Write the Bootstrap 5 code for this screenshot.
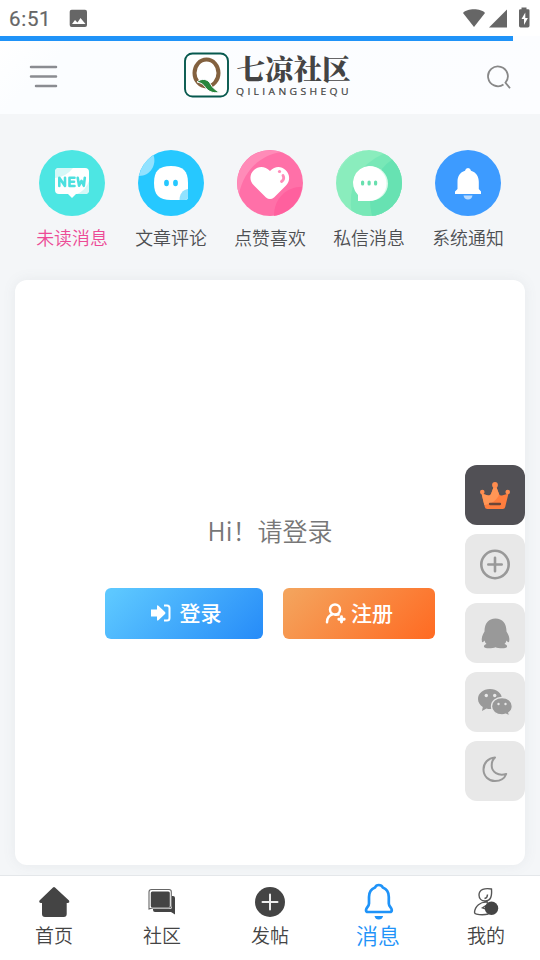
<!DOCTYPE html>
<html lang="zh-CN">
<head>
<meta charset="utf-8">
<meta name="viewport" content="width=device-width, initial-scale=1">
<title>七凉社区</title>
<link href="https://cdn.jsdelivr.net/npm/bootstrap@5.3.0/dist/css/bootstrap.min.css" rel="stylesheet">
<style>
body{font-family:"Noto Sans CJK SC",sans-serif;background:#f4f6f8;color:#4d4f52;height:960px;overflow:hidden}
svg{display:block;flex:none}
.status{height:36px;background:#fff;color:#666;padding:0 9px}
.clock{font:400 20.500px/36px Roboto,sans-serif;letter-spacing:.7px;width:60px;padding-top:1px;-webkit-text-stroke:.2px #666}
.load-track{height:5px;background:#fcfdff;border-radius:0}
.load-track .progress-bar{background:#1f93f8}
.site-head{height:73px;background:linear-gradient(135deg,#fff 0,#fbfdff 12%,#fcfdff);padding:0 27px 0 28px}
.brand{margin-right:12px}
.brand-words{margin-left:6px;padding-bottom:6px}
.brand-cn{font:900 28.5px/33px "Noto Serif CJK SC","Noto Sans CJK SC",serif;color:#444;white-space:nowrap;margin-bottom:1px}
.brand-en{font:500 9.5px/13px "Open Sans","Noto Sans",sans-serif;letter-spacing:3.100px;color:#444;margin-right:-8px;-webkit-text-stroke:.2px #444;transform:scaleX(1.085);transform-origin:left}
.shortcuts{height:166px;padding:36px 22.5px 0}
.shortcut{width:99px;font-size:17.900px;line-height:24px;font-weight:350}
.shortcut span{margin-top:9px}
.hot{color:#ec4b96}
.panel{margin:0 15px;height:585px;border-radius:12px;box-shadow:0 0 14px rgba(100,110,120,.09)}
.hello{font-size:25px;line-height:36px;color:#777;padding-top:232px;font-weight:350}
.acts{gap:20px;margin-top:40px}
.act{height:51px;border-radius:6px;font-size:21px;font-weight:500;line-height:30px;color:#fff;border:0;padding:0 0 3px}
.act:hover{color:#fff}
.act-in{width:158px;background:linear-gradient(135deg,#5dc8ff 5%,#268bf8)}
.act-up{width:152px;background:linear-gradient(135deg,#f4a35c 5%,#ff6a22)}
.act svg{margin-top:2px}
.floaters{position:fixed;left:465px;top:465px;gap:9px}
.floater{width:60px;height:60px;border-radius:12px;background:#e8e8e8;color:#999}
.floater.vip{background:#515055}
.tabs{height:85px;border-top:1px solid #e4e7ea;color:#444;font-size:19px}
.tabs a{width:108px;color:#444;padding-top:8px;line-height:30px;font-weight:350}
.tabs a.current{color:#1f93f8;font-size:22px;padding-top:6px;line-height:28px}
</style>
</head>
<body class="d-flex flex-column">
<div class="status d-flex align-items-center">
  <span class="clock">6:51</span>
  <svg width="20" height="20" viewBox="0 0 20 20"><rect x=".7" y="1.700" width="17.300" height="17.300" rx="2" fill="#666"/><path d="M3 16l3-4 2.500 2.500 3-4.500 5 6z" fill="#fff"/></svg>
  <svg class="ms-auto" width="68" height="24" viewBox="463 5.500 68 24" fill="#666"><path d="M463 12.500C467 7.500 481 7.500 485 12.500L474 26.500z"/><path d="M507 9v18h-18z"/><path d="M519 10q0-1.300 1.300-1.300h1.200V7h5v1.700h1.700q1.300 0 1.300 1.300v15.300q0 1.700-1.700 1.700h-7.200q-1.600 0-1.600-1.700z"/><path d="M525.300 12l-3.800 6.500h2.500v6l3.900-7h-2.600z" fill="#fff"/></svg>
</div>
<div class="progress load-track"><div class="progress-bar" style="width:95%"></div></div>
<header class="site-head d-flex align-items-center justify-content-between">
  <svg width="32" height="73" viewBox="28 41 32 73" stroke="#8a8c91" stroke-width="2.500" stroke-linecap="round"><path d="M31 67h25M31 76.500h25M36 86h20"/></svg>
  <div class="brand d-flex align-items-center">
    <svg width="46" height="73" viewBox="184 41 46 73" fill="none"><rect x="185" y="53.500" width="43" height="43" rx="7.500" fill="#fff" stroke="#07594e" stroke-width="1.900"/><ellipse cx="206.500" cy="73" rx="12" ry="13.500" stroke="#83613f" stroke-width="4"/><path d="M197 82c4-4 11-3.500 13.500 2 2 4 5 6 9 8.500-7 1-11-1-14-5-2-3-4-4.500-8.500-5.500z" fill="#28863c" stroke="#fcfdff"/></svg>
    <div class="brand-words d-flex flex-column"><span class="brand-cn">七凉社区</span><span class="brand-en">QILIANGSHEQU</span></div>
  </div>
  <svg width="26" height="73" viewBox="487 41.500 26 73" fill="none" stroke="#888" stroke-width="1.800"><path d="M503.500 85a9.900 9.900 0 1 1 2-1.800l4.500 5.600"/></svg>
</header>
<nav class="shortcuts d-flex text-center">
  <div class="shortcut hot d-flex flex-column align-items-center">
    <svg width="66" height="66" viewBox="0 0 66 66"><circle cx="33" cy="33" r="33" fill="#4de6e3"/><path d="M20 18h26q4 0 4 4v18q0 4-4 4h-9l-4 4-4-4h-9q-4 0-4-4V22q0-4 4-4z" fill="#fff"/><path d="M20 18h14q-7 9-18 10v-6q0-4 4-4zM50 31v9q0 4-4 4h-8q9-4 12-13z" fill="#d5f8f7"/><path d="M20.300 36v-8.300l5.700 8.300v-8.300M35.500 27.700h-5v8.300h5M31 31.700h4M38.700 27.700l1.400 8.100 2.400-5 2.300 5 1-8.100" fill="none" stroke="#4de0df" stroke-width="2.600" stroke-linecap="round" stroke-linejoin="round"/></svg>
    <span>未读消息</span></div>
  <div class="shortcut d-flex flex-column align-items-center">
    <svg width="66" height="66" viewBox="0 0 66 66"><circle cx="33" cy="33" r="33" fill="#26c8ff"/><path d="M1 26A33 33 0 0 1 15.500 5C19 15 12 26 1 26z" fill="#91e2ff"/><path d="M33 16c12 0 17 5 17 17v14q0 3-3 3H33c-12 0-17-5-17-17s5-17 17-17z" fill="#fff"/><path d="M50 39v8q0 3-3 3h-5.500c0-6 3-10 8.500-11z" fill="#91e2ff"/><ellipse cx="28.500" cy="33" rx="2.400" ry="3.200" fill="#26c8ff"/><ellipse cx="37.500" cy="33" rx="2.400" ry="3.200" fill="#26c8ff"/></svg>
    <span>文章评论</span></div>
  <div class="shortcut d-flex flex-column align-items-center">
    <svg width="66" height="66" viewBox="0 0 66 66"><circle cx="33" cy="33" r="33" fill="#ff70a8"/><path d="M2 44A33 33 0 0 1 44 2C24 5 7 20 2 44z" fill="#ff8bb8"/><path d="M37 65.700c0-17 12-29 28-29A33 33 0 0 1 37 65.700z" fill="#ff609e"/><path d="M33 21c5-5 11-5 15.500-1s5 11 .5 15.500L37 47.500q-4 3-8 0L17 35.500C12 31 12.500 24 17 20s11-4 16 1z" fill="#fff"/><circle cx="42.500" cy="21.500" r="1.600" fill="#ff8bb8"/><path d="M46 25.500q2 3.500-1.500 6" fill="none" stroke="#ff8bb8" stroke-width="2.800" stroke-linecap="round"/></svg>
    <span>点赞喜欢</span></div>
  <div class="shortcut d-flex flex-column align-items-center">
    <svg width="66" height="66" viewBox="0 0 66 66"><defs><clipPath id="disc"><circle cx="33" cy="33" r="33"/></clipPath></defs><g clip-path="url(#disc)"><path d="M0 0h66v66H0z" fill="#8aedbd"/><path d="M49 3Q8 21 16 66h50V3z" fill="#78e8b7"/><path d="M58 8Q27 30 36 66h30V8z" fill="#67e2b2"/><path d="M0 33A36 36 0 0 1 40 0H0z" fill="#97efc5"/></g><circle cx="35" cy="33.500" r="17" fill="#d8fae9"/><path d="M33 16a17 17 0 0 1 0 35H22v-6a17 17 0 0 1 11-29z" fill="#fff"/><g fill="#68dfae"><rect x="25" y="30.500" width="3.200" height="5" rx="1.600"/><rect x="31.500" y="30.500" width="3.200" height="5" rx="1.600"/><rect x="38" y="30.500" width="3.200" height="5" rx="1.600"/></g></svg>
    <span>私信消息</span></div>
  <div class="shortcut d-flex flex-column align-items-center">
    <svg width="66" height="66" viewBox="0 0 66 66"><circle cx="33" cy="33" r="33" fill="#3d9bff"/><path d="M33 18q2.500 0 3 2.700c5 1.500 7.800 5.500 7.800 11V39l2.200 2.500V44H20v-2.500l2.500-2.500v-7.300c0-5.500 2.500-9.500 7.500-11q.5-2.700 3-2.700z" fill="#fff"/><path d="M28.500 45.500h9q-.8 4-4.500 4t-4.500-4z" fill="#b9dbff"/></svg>
    <span>系统通知</span></div>
</nav>
<main class="panel bg-white text-center">
  <div class="hello">Hi！请登录</div>
  <div class="acts d-flex justify-content-center">
    <button class="btn act act-in d-flex align-items-center justify-content-center ps-1"><svg class="me-2" width="21" height="18" viewBox="0 0 21 18"><path d="M0 5.500h6V2.500q0-1.800 1.400-.8l6.600 6.200q1 1.100 0 2.200l-6.600 6.200q-1.400 1-1.400-.8v-3H0z" fill="#fff"/><path d="M13 1.500h3q2.500 0 2.500 2.500v10q0 2.500-2.500 2.500h-3" fill="none" stroke="#fff" stroke-width="2"/></svg>登录</button>
    <button class="btn act act-up d-flex align-items-center justify-content-center"><svg class="me-1" width="22" height="21" viewBox="0.500 0 22 21" fill="none" stroke="#fff" stroke-width="2.500" stroke-linecap="round"><circle cx="10.500" cy="6.500" r="5"/><path d="M2.500 19.300c0-4 2-6.800 5.500-8M14 11.500l-3 .3"/><path d="M17 13.700v5.300M14.300 16.300h5.400" stroke-width="2.900"/></svg>注册</button>
  </div>
</main>
<nav class="tabs mt-auto bg-white d-flex text-center">
  <a class="text-decoration-none d-flex flex-column align-items-center"><svg width="36" height="36" viewBox="36 884 36 36" fill="#444"><path d="M53 887.500q1-1 2 0l14 13q1 2.500-1.500 2.500h-.8v11q0 3-3 3H45q-3 0-3-3v-11h-1q-2.500-.5-1.500-2.500z"/></svg><span>首页</span></a>
  <a class="text-decoration-none d-flex flex-column align-items-center"><svg width="36" height="36" viewBox="144 884 36 36"><path d="M172 896h1q2 0 2 2v16.500l-4-2.500h-16q-2 0-2-2v-1h17q2 0 2-2z" fill="#444"/><rect x="150.800" y="891.500" width="19" height="16" rx="1.500" fill="#444"/><path d="M149 909v-17q0-2.500 2.500-2.500H169q2.300 0 2.300 2.300v14q0 2.200-2.300 2.200h-16.500z" fill="none" stroke="#666" stroke-width="1.100"/></svg><span>社区</span></a>
  <a class="text-decoration-none d-flex flex-column align-items-center"><svg width="36" height="36" viewBox="252 884 36 36"><circle cx="270" cy="902" r="15" fill="#444"/><path d="M270 894.500v15M262.500 902h15" stroke="#eee" stroke-width="2" stroke-linecap="round"/></svg><span>发帖</span></a>
  <a class="current text-decoration-none d-flex flex-column align-items-center"><svg width="36" height="38" viewBox="360 882 36 38"><path d="M378.800 885q2.800 0 4 2.500c4 1.500 6 5 6 9.500v6.500c0 3 3 4 3 6.500q0 2-2 2H368q-2 0-2-2c0-2.500 3-3.500 3-6.500V897c0-4.500 2-8 6-9.500q1-2.500 3.800-2.500z" fill="none" stroke="#1f93f8" stroke-width="2.700"/><path d="M374.500 916h8.600q-.8 3.500-4.300 3.500t-4.300-3.500z" fill="#1f93f8"/></svg><span>消息</span></a>
  <a class="text-decoration-none d-flex flex-column align-items-center"><svg width="36" height="36" viewBox="468 884 36 36" fill="none" stroke="#555" stroke-width="1.400"><path d="M491.500 889c.5 7-.5 12-6.500 12-3.500 0-6-2.500-6-6 0-6 6-7 12.500-6zM487.500 894.500q0 3.500-3 4M488 902.300c-8-1-13 4-13.500 10q0 1.500 2 1.800c4 1 8 .9 12-.1M486 905.500l-3.500 2.300 4 1.500"/><circle cx="491.500" cy="908.300" r="6.700" fill="#444" stroke="none"/></svg><span>我的</span></a>
</nav>
<aside class="floaters d-flex flex-column">
  <div class="floater vip d-flex align-items-center justify-content-center"><svg width="60" height="60" viewBox="0 0 60 60"><path d="M16.500 28.500l6.500 2q2 .5 3-1.500L29 21h2l3 8q1 2 3 1.500l6.500-2L40.200 42q-.4 2-2.500 2H22.300q-2.100 0-2.500-2z" fill="#ff7e3e"/><path d="M16.500 28.500l6.500 2q2 .5 3-1.500L29 21h2l3 8C33 35 26 39 19.300 40z" fill="#ff9656"/><g fill="#ff8c4e"><circle cx="30" cy="20" r="2.900"/><circle cx="17.300" cy="27" r="2.300"/><circle cx="42.700" cy="27" r="2.300"/></g><path d="M25 39h10" stroke="#6b4638" stroke-width="2.300" stroke-linecap="round"/></svg></div>
  <div class="floater"><svg width="60" height="60" viewBox="0 0 60 60" fill="none" stroke="#999" stroke-width="2.600" stroke-linecap="round"><circle cx="30" cy="30.500" r="13.700"/><path d="M30 23.800v13.400M23.300 30.500h13.400"/></svg></div>
  <div class="floater"><svg width="60" height="60" viewBox="0 0 60 60" fill="#999"><path d="M30.500 15.500c7 0 11 5 11 13 2 3 3.700 7 2.500 10.500-1 .5-2-.5-2.500-1.500q-.5 2-2 3.500 3 1 2.500 3c-1 2-9 1.500-11.500.2-2.500 1.300-10.500 1.800-11.500-.2q-.5-2 2.500-3-1.500-1.500-2-3.500c-.5 1-1.500 2-2.500 1.500-1-3.500.5-7.500 2.500-10.500 0-8 4-13 11-13z"/></svg></div>
  <div class="floater"><svg width="60" height="60" viewBox="0 0 60 60"><path d="M25 17c7 0 12 4.500 12 10s-5 10-12 10q-2 0-3.500-.5L17 39l.8-4C15 33 13 30.500 13 27c0-5.500 5-10 12-10z" fill="#999"/><path d="M37 25.500c6 0 10.300 3.800 10.300 8.800 0 2.700-1.300 5-3.500 6.500l1 3.200-4-1.800q-2 .7-3.800.7c-6 0-10.500-3.600-10.500-8.600s4.500-8.800 10.500-8.800z" fill="#999" stroke="#e8e8e8" stroke-width="1.300"/><g fill="#e8e8e8"><circle cx="21.300" cy="23.500" r="1.700"/><circle cx="29.700" cy="23.500" r="1.700"/><circle cx="33.500" cy="32" r="1.200"/><circle cx="40.500" cy="32" r="1.200"/></g></svg></div>
  <div class="floater"><svg width="60" height="60" viewBox="0 0 60 60" fill="none" stroke="#999" stroke-width="2" stroke-linejoin="round"><path d="M30 16.500c-7 .5-11.500 5.500-11.500 12C18.500 35 23.500 40 30 40c5 0 9.500-2.500 11.200-7-8 2.500-14.500-2-14.500-8.500 0-3.500 1-6 3.300-8z"/></svg></div>
</aside>
<script src="https://cdn.jsdelivr.net/npm/bootstrap@5.3.0/dist/js/bootstrap.bundle.min.js"></script>
</body>
</html>
